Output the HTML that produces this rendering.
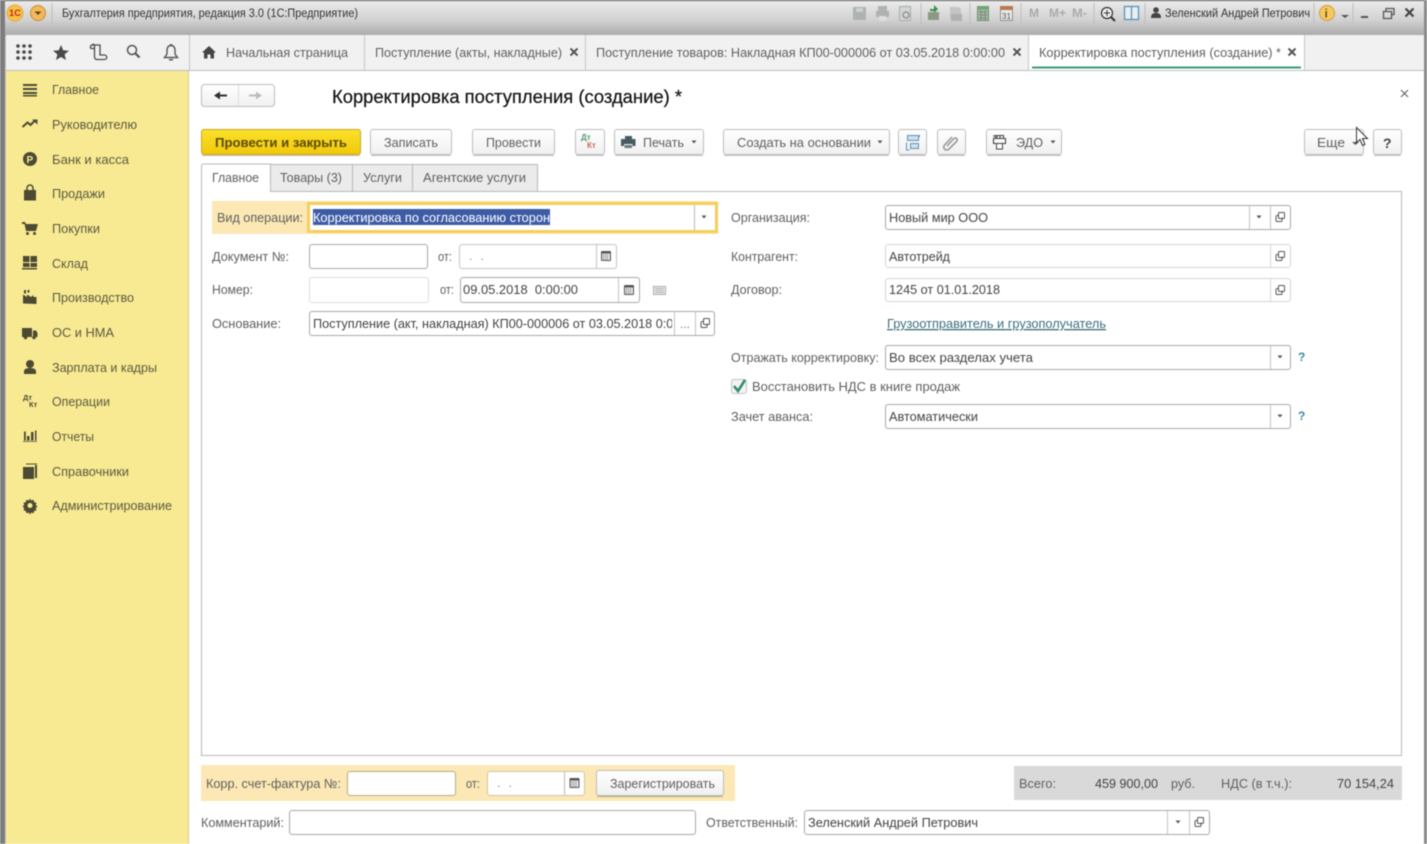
<!DOCTYPE html>
<html lang="ru"><head><meta charset="utf-8"><title>Корректировка поступления</title>
<style>
html,body{margin:0;padding:0;background:#fff;overflow:hidden}
svg{display:block;filter:blur(.45px)}
text{font-family:"Liberation Sans",sans-serif;font-size:13px;fill:#606060}
.s text{fill:#5c5a40}
.l{fill:#fff;stroke:#a9a9a9}
.b{fill:url(#btn);stroke:#bdbdbd}
</style></head><body>
<svg width="1427" height="844" viewBox="0 0 1427 844" xmlns="http://www.w3.org/2000/svg">
<defs>
<linearGradient id="tb" x1="0" y1="0" x2="0" y2="1"><stop offset="0" stop-color="#ececec"/><stop offset=".55" stop-color="#d2d2d2"/><stop offset="1" stop-color="#a9a9a9"/></linearGradient>
<linearGradient id="btn" x1="0" y1="0" x2="0" y2="1"><stop offset="0" stop-color="#fff"/><stop offset="1" stop-color="#f0f0f0"/></linearGradient>
<linearGradient id="yb" x1="0" y1="0" x2="0" y2="1"><stop offset="0" stop-color="#fbe12b"/><stop offset="1" stop-color="#f1c809"/></linearGradient>
<clipPath id="osn"><rect x="313" y="313" width="359" height="20"/></clipPath>
<g id="open" fill="none" stroke="#555" stroke-width="1"><rect x="-1.5" y="-4.5" width="6" height="6" rx="1"/><path d="M-1.5-1.5h-1.5a1 1 0 0 0-1 1v4a1 1 0 0 0 1 1h4a1 1 0 0 0 1-1v-3"/></g>
<path id="arr" d="M-2.500-1.500h5l-2.500 3z" fill="#555"/>
<g id="cal"><rect x="-5" y="-5" width="10" height="10" rx="1" fill="#555"/><rect x="-4" y="-2.500" width="8" height="6.500" fill="#e6e6e6"/><path d="M-3-1h6M-3 1h6M-3 3h6" stroke="#666" stroke-dasharray="1 1"/></g>
<g id="x"><path d="M-3.500-3.500l7 7M3.500-3.500l-7 7" stroke="#555" stroke-width="2"/></g>
</defs>

<rect width="1427" height="844" fill="#fff"/>
<!-- title bar -->
<rect width="1427" height="36" fill="url(#tb)"/>
<rect width="1427" height="1" fill="#555"/>
<circle cx="15" cy="13" r="8" fill="#f6c445" stroke="#e8a93a"/>
<text x="9" y="16" font-weight="700" textLength="12" lengthAdjust="spacingAndGlyphs" style="font-size:9px;fill:#c8261a">1С</text>
<circle cx="38" cy="13" r="7.500" fill="#f3b85a" stroke="#c98a31"/>
<path d="M34.500 11.500h7l-3.500 3.500z" fill="#5a4522"/>
<path d="M52 3v21" stroke="#bbb"/>
<text x="62" y="17" textLength="296" lengthAdjust="spacingAndGlyphs" style="font-size:11.500px;fill:#333">Бухгалтерия предприятия, редакция 3.0  (1С:Предприятие)</text>
<g fill="#aeb2b2">
<path d="M853 7h13v13h-13z"/><rect x="856" y="8" width="7" height="4" fill="#cfd1d1"/>
<path d="M878 6h9v5h-9zM876 11h13v6h-13z"/><rect x="879" y="16" width="7" height="5" fill="#ddd"/>
<rect x="899.500" y="6.500" width="11" height="14" fill="#d4d6d6" stroke="#aaa"/>
<circle cx="906" cy="15" r="3" fill="none" stroke="#8f9595" stroke-width="1.500"/>
<path d="M928 12h11v8h-11z" fill="#8b9a85"/><path d="M930 9h4V5l4 4-4 4v-2h-4z" fill="#3f8f4a"/>
<path d="M950 7h9l2 2v10h-11z" fill="#c4c6c6"/><path d="M951 14h11v7h-11z"/>
<rect x="977.500" y="6.500" width="11" height="14" fill="#a3b8a3" stroke="#6e8f70"/><rect x="977.500" y="6.500" width="11" height="3" fill="#6fa873"/><path d="M979 12h8M979 15h8M979 18h8M981 10v10M985 10v10" stroke="#7d8f7d"/>
<rect x="1000.500" y="7.500" width="12" height="13" fill="#e8e8e8" stroke="#9a8f85"/><rect x="1000" y="6" width="13" height="4" fill="#b97a50"/>
</g>
<text x="1002" y="19" textLength="9" lengthAdjust="spacingAndGlyphs" style="font-size:8px;fill:#555">31</text>
<path d="M921 3v21M970 3v21M1021 3v21M1094 3v21M1145 3v21M1314 3v21M1353 3v21" stroke="#bdbdbd"/>
<text x="1029" y="17" font-weight="700" textLength="10" lengthAdjust="spacingAndGlyphs" style="font-size:12px;fill:#a9abab">M</text>
<text x="1049" y="17" font-weight="700" textLength="17" lengthAdjust="spacingAndGlyphs" style="font-size:12px;fill:#a9abab">M+</text>
<text x="1072" y="17" font-weight="700" textLength="15" lengthAdjust="spacingAndGlyphs" style="font-size:12px;fill:#a9abab">M-</text>
<circle cx="1107" cy="13" r="5.500" fill="#eee" stroke="#333" stroke-width="1.200"/><path d="M1111 17l4 4" stroke="#333" stroke-width="2"/><path d="M1104 13h6M1107 10v6" stroke="#333"/>
<rect x="1124.500" y="6.500" width="14" height="13" fill="#e9eef2" stroke="#5a93b8" stroke-width="1.300"/><path d="M1131.500 7v12" stroke="#5a93b8" stroke-width="1.300"/>
<circle cx="1156" cy="10" r="2.800" fill="#444"/><path d="M1151 18c0-4 2-5 5-5s5 1 5 5z" fill="#444"/>
<text x="1165" y="17" textLength="145" lengthAdjust="spacingAndGlyphs" style="font-size:12px;fill:#333">Зеленский Андрей Петрович</text>
<circle cx="1327" cy="13" r="7.500" fill="#f5c95f" stroke="#d39a38"/>
<text x="1324.500" y="17.500" font-weight="700" style="font-size:12px;fill:#6e5520">i</text>
<path d="M1341 15h8l-4 3z" fill="#555"/>
<path d="M1361 17h7" stroke="#555" stroke-width="2"/>
<path d="M1383.500 11.500h8v7h-8zM1386 11V8.500h8v6h-2" fill="none" stroke="#555" stroke-width="1.300"/>
<path d="M1405.500 8.500l8 8M1413.500 8.500l-8 8" stroke="#444" stroke-width="2.200"/>

<!-- frame -->
<rect x="0" y="0" width="5" height="844" fill="#7d7d7d"/>
<rect x="5" y="36" width="1" height="808" fill="#c7c7c7"/>
<rect x="1424" y="0" width="3" height="844" fill="#8a8a8a"/>

<!-- panel tab bar -->
<rect x="6" y="35" width="1418" height="35" fill="#f1f1f1"/>
<rect x="6" y="70" width="1418" height="1" fill="#bfbfbf"/>
<g fill="#4a4a4a">
<circle cx="18" cy="46" r="1.800"/><circle cx="24" cy="46" r="1.800"/><circle cx="30" cy="46" r="1.800"/>
<circle cx="18" cy="52" r="1.800"/><circle cx="24" cy="52" r="1.800"/><circle cx="30" cy="52" r="1.800"/>
<circle cx="18" cy="58" r="1.800"/><circle cx="24" cy="58" r="1.800"/><circle cx="30" cy="58" r="1.800"/>
<path d="M61 45l2.200 5.200 5.800.5-4.400 3.700 1.400 5.600-5-3-5 3 1.400-5.600-4.400-3.700 5.800-.5z"/>
</g>
<path d="M90.500 48.500v-2a1.500 1.500 0 0 1 1.500-1.500h8v10h4.500a2 2 0 0 1 0 4.500h-7.500a2.500 2.500 0 0 1-2.500-2.500v-11a2 2 0 0 0-2-2M90.500 48.500h3.500" fill="none" stroke="#4a4a4a" stroke-width="1.300"/>
<circle cx="132" cy="50" r="4.500" fill="none" stroke="#555" stroke-width="1.500"/><path d="M135.500 53.500l4 4" stroke="#555" stroke-width="2.200"/>
<path d="M171 45.500c-3 0-4 2.500-4 5v3.500l-2.500 3.500h13l-2.500-3.500v-3.500c0-2.500-1-5-4-5z" fill="none" stroke="#555" stroke-width="1.400"/><path d="M169 59h4v1.500h-4zM170 44h2v2h-2z" fill="#555"/>
<path d="M209 46l-7 6.500h2v6h3.500v-4h3v4h3.500v-6h2z" fill="#444"/>
<path d="M189.500 35v35M364.500 35v35M585.500 35v35M1028.500 35v35M1304.500 35v35" stroke="#c4c4c4"/>
<rect x="1029" y="35" width="275" height="35" fill="#fff"/>
<rect x="1032" y="66.500" width="269" height="2" fill="#3a9a7a"/>
<text x="226" y="57" textLength="122" lengthAdjust="spacingAndGlyphs">Начальная страница</text>
<text x="375" y="57" textLength="187" lengthAdjust="spacingAndGlyphs">Поступление (акты, накладные)</text>
<text x="596" y="57" textLength="409" lengthAdjust="spacingAndGlyphs">Поступление товаров: Накладная КП00-000006 от 03.05.2018 0:00:00</text>
<text x="1039" y="57" textLength="242" lengthAdjust="spacingAndGlyphs">Корректировка поступления (создание) *</text>
<use href="#x" x="574" y="52"/><use href="#x" x="1017" y="52"/><use href="#x" x="1292" y="52"/>

<!-- sidebar -->
<rect x="6" y="71" width="183" height="773" fill="#f8ea92"/>
<rect x="188" y="71" width="1" height="773" fill="#d3cb8e"/>
<g class="s">
<text x="52" y="94" textLength="47" lengthAdjust="spacingAndGlyphs">Главное</text>
<text x="52" y="129" textLength="85" lengthAdjust="spacingAndGlyphs">Руководителю</text>
<text x="52" y="164" textLength="77" lengthAdjust="spacingAndGlyphs">Банк и касса</text>
<text x="52" y="198" textLength="53" lengthAdjust="spacingAndGlyphs">Продажи</text>
<text x="52" y="233" textLength="48" lengthAdjust="spacingAndGlyphs">Покупки</text>
<text x="52" y="268" textLength="36" lengthAdjust="spacingAndGlyphs">Склад</text>
<text x="52" y="302" textLength="82" lengthAdjust="spacingAndGlyphs">Производство</text>
<text x="52" y="337" textLength="62" lengthAdjust="spacingAndGlyphs">ОС и НМА</text>
<text x="52" y="372" textLength="105" lengthAdjust="spacingAndGlyphs">Зарплата и кадры</text>
<text x="52" y="406" textLength="58" lengthAdjust="spacingAndGlyphs">Операции</text>
<text x="52" y="441" textLength="42" lengthAdjust="spacingAndGlyphs">Отчеты</text>
<text x="52" y="476" textLength="77" lengthAdjust="spacingAndGlyphs">Справочники</text>
<text x="52" y="510" textLength="120" lengthAdjust="spacingAndGlyphs">Администрирование</text>
</g>
<g fill="#4d4a33">
<path d="M23 84h14v2h-14zM23 88h14v2h-14zM23 92h14v2h-14zM23 95h14v1.500h-14z"/>
<path d="M22.500 127l5-4.500 3 2.500 4-4" fill="none" stroke="#4d4a33" stroke-width="2"/><path d="M32 119.500h5.500v5z"/>
<circle cx="30" cy="159" r="7"/>
<path d="M24 190h12v10.500h-12z"/>
<path d="M27 190v-2a3 3 0 0 1 6 0v2" fill="none" stroke="#4d4a33" stroke-width="1.500"/>
<path d="M22 222h3l1 2h12l-2 7h-10l-1.500-7h-2.500z"/><circle cx="27.500" cy="233.500" r="1.500"/><circle cx="34.500" cy="233.500" r="1.500"/>
<path d="M23 256h6.500v6h-6.500zM30.500 256h6.500v6h-6.500zM23 263h6.500v4h-6.500zM30.500 263h6.500v4h-6.500zM22 268h15v1.500h-15z"/>
<path d="M23 303.500v-9l4 2.500v-2.500l4 2.500 2.500-2v2h3v7zM24 290h2v3.500h-2zM27.500 290h2v2.500h-2z"/>
<path d="M22 328h10v9h-10zM33 330.500h3l1.500 2.500v4h-4.500z"/><circle cx="25.500" cy="337.500" r="1.800"/><circle cx="34" cy="337.500" r="1.800"/>
<circle cx="30" cy="364" r="4"/><path d="M24 374v-3c0-2 3-3 6-3s6 1 6 3v3z"/>
<path d="M24 431.500h1.800v9h-1.800zM27 436h2.500v4.500h-2.500zM31 432h2.500v8.500h-2.500zM35 430.500h1.500v10h-1.500zM23 441h14v.8h-14z"/>
<path d="M23 467h11v12h-11z"/><path d="M35 465h2v13h-2zM26 463.500h11v1h-11z"/>
<path d="M30 498.500l1.200 2 2.300-.7.700 2.300 2.300.7-.7 2.300 1.700 1.400-1.700 1.500.7 2.300-2.300.7-.7 2.300-2.300-.7-1.200 2-1.200-2-2.300.7-.7-2.300-2.300-.7.700-2.300-1.700-1.500 1.700-1.400-.7-2.300 2.300-.7.700-2.300 2.300.7z"/>
</g>
<circle cx="30" cy="505.500" r="2.500" fill="#f8ea92"/>
<text x="26.500" y="163" font-weight="700" style="font-size:10px;fill:#f8ea92">Р</text>
<text x="23" y="400" font-weight="700" style="font-size:7.500px;fill:#4d4a33">Дт</text>
<text x="29" y="407" font-weight="700" style="font-size:7.500px;fill:#4d4a33">Кт</text>

<!-- header -->
<rect x="201.500" y="84.500" width="73" height="22" rx="3" class="b"/><path d="M238.500 85v21" stroke="#ddd"/>
<path d="M214 95.500l6-4v3h7v2h-7v3z" fill="#333"/>
<path d="M262 95.500l-6-4v3h-7v2h7v3z" fill="#bdbdbd"/>
<text x="332" y="103" textLength="350" lengthAdjust="spacingAndGlyphs" stroke="#111" stroke-width=".2" style="font-size:18px;fill:#111">Корректировка поступления (создание) *</text>
<path d="M1401 90l7 7M1408 90l-7 7" stroke="#666" stroke-width="1.200"/>

<!-- command bar -->
<rect x="201.500" y="129.500" width="159" height="25" rx="2.500" fill="url(#yb)" stroke="#c9a626"/>
<rect x="370.500" y="129.500" width="81" height="25" rx="2.500" class="b"/>
<rect x="472.500" y="129.500" width="82" height="25" rx="2.500" class="b"/>
<rect x="575.500" y="129.500" width="29" height="25" rx="2.500" class="b"/>
<rect x="614.500" y="129.500" width="89" height="25" rx="2.500" class="b"/>
<rect x="723.500" y="129.500" width="166" height="25" rx="2.500" class="b"/>
<rect x="898.500" y="129.500" width="28" height="25" rx="2.500" class="b"/>
<rect x="937.500" y="129.500" width="28" height="25" rx="2.500" class="b"/>
<rect x="986.500" y="129.500" width="75" height="25" rx="2.500" class="b"/>
<rect x="1304.500" y="129.500" width="59" height="25" rx="2.500" class="b"/>
<rect x="1373.500" y="129.500" width="28" height="25" rx="2.500" class="b"/>
<path d="M202 155.500h158M371 155.500h80M473 155.500h81M576 155.500h28M615 155.500h88M724 155.500h165M899 155.500h27M938 155.500h27M987 155.500h74M1305 155.500h58M1374 155.500h27" stroke="#c2c2c2"/>
<text x="215" y="147" font-weight="700" textLength="132" lengthAdjust="spacingAndGlyphs" style="fill:#5b4a07">Провести и закрыть</text>
<text x="384" y="147" textLength="54" lengthAdjust="spacingAndGlyphs">Записать</text>
<text x="486" y="147" textLength="55" lengthAdjust="spacingAndGlyphs">Провести</text>
<text x="581" y="140" font-weight="700" style="font-size:8px;fill:#4f9a70">Дт</text>
<text x="587" y="148" font-weight="700" style="font-size:8px;fill:#d0665c">Кт</text>
<path d="M625 136h7v3h-7zM621 139h14.500v7h-3v-2h-8.500v2h-3z" fill="#4a5a62"/><rect x="624.500" y="145" width="7.500" height="3" fill="#6a7a82"/>
<text x="643" y="147" textLength="41" lengthAdjust="spacingAndGlyphs">Печать</text>
<use href="#arr" x="694" y="142"/>
<text x="737" y="147" textLength="134" lengthAdjust="spacingAndGlyphs">Создать на основании</text>
<use href="#arr" x="880" y="142"/>
<path d="M907.500 135.500h11v5h-11zM910.500 143.500h8v5h-8z" fill="#cfe0ec" stroke="#5d92b5"/><path d="M906.500 142.500v7.500h3M919.500 135v2" fill="none" stroke="#5d92b5"/>
<path d="M947 146l7-7.500a2 2 0 0 1 3 2.500l-8 8a3 3 0 0 1-4.500-4l7.500-8" fill="none" stroke="#999" stroke-width="1.600"/>
<path d="M995.500 135.500h8v3h-8zM994 137v-2M997 135v3M1000 135v3M993.500 138.500h12v5h-12z" fill="none" stroke="#444" stroke-width="1.100"/><rect x="996.500" y="143.500" width="6" height="5.500" fill="#fff" stroke="#444"/>
<text x="1016" y="147" textLength="27" lengthAdjust="spacingAndGlyphs">ЭДО</text>
<use href="#arr" x="1053" y="142"/>
<text x="1317" y="147" textLength="28" lengthAdjust="spacingAndGlyphs">Еще</text>
<path d="M1352 142h7l-3.500 3z" fill="#555"/>
<text x="1383" y="148" font-weight="700" style="font-size:14px;fill:#444">?</text>
<path d="M1356.500 127.500v15l3.500-3 2.500 6 2.500-1-2.500-6h5z" fill="#fff" stroke="#333"/>

<!-- tabs and group -->
<rect x="201.500" y="191.500" width="1200" height="564" fill="#fff" stroke="#b8b8b8"/>
<rect x="270.500" y="164.500" width="82" height="27" fill="#ebebeb" stroke="#b8b8b8"/>
<rect x="352.500" y="164.500" width="60" height="27" fill="#ebebeb" stroke="#b8b8b8"/>
<rect x="412.500" y="164.500" width="125" height="27" fill="#ebebeb" stroke="#b8b8b8"/>
<path d="M201.500 192v-26a2 2 0 0 1 2-2h67v28" fill="#fff" stroke="#b8b8b8"/>
<rect x="202" y="190" width="68" height="3" fill="#fff"/>
<text x="212" y="182" textLength="47" lengthAdjust="spacingAndGlyphs">Главное</text>
<text x="280" y="182" textLength="62" lengthAdjust="spacingAndGlyphs">Товары (3)</text>
<text x="363" y="182" textLength="39" lengthAdjust="spacingAndGlyphs">Услуги</text>
<text x="423" y="182" textLength="103" lengthAdjust="spacingAndGlyphs">Агентские услуги</text>

<!-- left column -->
<rect x="212" y="201" width="506" height="33" fill="#fbe8b4"/>
<rect x="308.500" y="203.500" width="408" height="28" fill="#fff" stroke="#f4cf5c" stroke-width="3"/>
<path d="M694.500 205v25" stroke="#bbb"/>
<use href="#arr" x="704" y="217"/>
<rect x="313" y="209" width="237" height="16" fill="#3e5ba6"/>
<text x="217" y="222" textLength="86" lengthAdjust="spacingAndGlyphs">Вид операции:</text>
<text x="313" y="222" textLength="237" lengthAdjust="spacingAndGlyphs" style="fill:#fff">Корректировка по согласованию сторон</text>

<text x="212" y="261" textLength="77" lengthAdjust="spacingAndGlyphs">Документ №:</text>
<rect x="309.500" y="244.500" width="118" height="24" rx="2.500" class="l"/>
<text x="438" y="261" textLength="14" lengthAdjust="spacingAndGlyphs">от:</text>
<rect x="459.500" y="244.500" width="157" height="24" rx="2.500" fill="#fff" stroke="#c4c4c4"/>
<path d="M596.500 245v23" stroke="#c4c4c4"/>
<text x="469" y="260" textLength="15" lengthAdjust="spacing" style="fill:#999">. .</text>
<use href="#cal" x="606" y="256"/>

<text x="212" y="294" textLength="41" lengthAdjust="spacingAndGlyphs">Номер:</text>
<rect x="309.500" y="277.500" width="119" height="25" rx="2.500" fill="#fff" stroke="#dedede"/>
<text x="440" y="294" textLength="14" lengthAdjust="spacingAndGlyphs">от:</text>
<rect x="460.500" y="277.500" width="179" height="25" rx="2.500" class="l"/>
<path d="M618.500 278v24" stroke="#c4c4c4"/>
<text x="463" y="294" textLength="115" lengthAdjust="spacingAndGlyphs" style="fill:#444">09.05.2018&#160;&#160;0:00:00</text>
<use href="#cal" x="629" y="290"/>
<rect x="653.500" y="286.500" width="12" height="8" fill="#f2f2f2" stroke="#aaa"/><path d="M655 288.500h9M655 290.500h9M655 292.500h9" stroke="#aaa"/>

<text x="212" y="328" textLength="69" lengthAdjust="spacingAndGlyphs">Основание:</text>
<rect x="309.500" y="311.500" width="405" height="24" rx="2.500" class="l"/>
<path d="M674.500 312v23M695.500 312v23" stroke="#c4c4c4"/>
<g clip-path="url(#osn)"><text x="313" y="328" textLength="385" lengthAdjust="spacingAndGlyphs" style="fill:#444">Поступление (акт, накладная) КП00-000006 от 03.05.2018 0:00:00</text></g>
<text x="680" y="328" style="font-size:12px;fill:#777">...</text>
<use href="#open" x="705" y="323"/>

<!-- right column -->
<text x="731" y="222" textLength="79" lengthAdjust="spacingAndGlyphs">Организация:</text>
<rect x="885.500" y="205.500" width="405" height="24" rx="2.500" class="l"/>
<path d="M1249.500 206v23M1270.500 206v23" stroke="#c4c4c4"/>
<text x="889" y="222" textLength="99" lengthAdjust="spacingAndGlyphs" style="fill:#444">Новый мир ООО</text>
<use href="#arr" x="1259" y="217"/><use href="#open" x="1280" y="217"/>

<text x="731" y="261" textLength="67" lengthAdjust="spacingAndGlyphs">Контрагент:</text>
<rect x="885.500" y="244.500" width="405" height="23" rx="2.500" fill="#fff" stroke="#d4d4d4"/>
<path d="M1270.500 245v22" stroke="#d4d4d4"/>
<text x="889" y="261" textLength="61" lengthAdjust="spacingAndGlyphs" style="fill:#444">Автотрейд</text>
<use href="#open" x="1280" y="256"/>

<text x="731" y="294" textLength="51" lengthAdjust="spacingAndGlyphs">Договор:</text>
<rect x="885.500" y="278.500" width="405" height="23" rx="2.500" fill="#fff" stroke="#d4d4d4"/>
<path d="M1270.500 279v22" stroke="#d4d4d4"/>
<text x="889" y="294" textLength="111" lengthAdjust="spacingAndGlyphs" style="fill:#444">1245 от 01.01.2018</text>
<use href="#open" x="1280" y="290"/>

<text x="887" y="328" textLength="219" lengthAdjust="spacingAndGlyphs" text-decoration="underline" style="fill:#3d6f7d">Грузоотправитель и грузополучатель</text>

<text x="731" y="362" textLength="148" lengthAdjust="spacingAndGlyphs">Отражать корректировку:</text>
<rect x="885.500" y="345.500" width="405" height="24" rx="2.500" class="l"/>
<path d="M1270.500 346v23" stroke="#c4c4c4"/>
<text x="889" y="362" textLength="144" lengthAdjust="spacingAndGlyphs" style="fill:#444">Во всех разделах учета</text>
<use href="#arr" x="1280" y="357"/>
<text x="1298" y="361" font-weight="700" style="font-size:12px;fill:#3d8a9a">?</text>

<rect x="731.500" y="379.500" width="15" height="14" rx="2" fill="#f3f3f3" stroke="#c4c4c4"/>
<path d="M734 386l4 5 7-11" fill="none" stroke="#2f8f70" stroke-width="2.600"/>
<text x="752" y="391" textLength="208" lengthAdjust="spacingAndGlyphs">Восстановить НДС в книге продаж</text>

<text x="731" y="421" textLength="82" lengthAdjust="spacingAndGlyphs">Зачет аванса:</text>
<rect x="885.500" y="404.500" width="405" height="24" rx="2.500" class="l"/>
<path d="M1270.500 405v23" stroke="#c4c4c4"/>
<text x="889" y="421" textLength="89" lengthAdjust="spacingAndGlyphs" style="fill:#444">Автоматически</text>
<use href="#arr" x="1280" y="416"/>
<text x="1298" y="420" font-weight="700" style="font-size:12px;fill:#3d8a9a">?</text>

<!-- bottom -->
<rect x="201" y="765" width="534" height="36" fill="#fbe8b4"/>
<text x="206" y="788" textLength="135" lengthAdjust="spacingAndGlyphs">Корр. счет-фактура №:</text>
<rect x="347.500" y="771.500" width="108" height="24" rx="2.500" fill="#fff" stroke="#b7ab88"/>
<text x="466" y="788" textLength="14" lengthAdjust="spacingAndGlyphs">от:</text>
<rect x="487.500" y="771.500" width="97" height="24" rx="2.500" fill="#fff" stroke="#cfc6a5"/>
<path d="M564.500 772v23" stroke="#bbb"/>
<text x="497" y="787" textLength="15" lengthAdjust="spacing" style="fill:#999">. .</text>
<use href="#cal" x="574.500" y="783"/>
<rect x="596.500" y="770.500" width="127" height="25" rx="2.500" class="b"/>
<path d="M597 796.500h126" stroke="#b5a878"/>
<text x="610" y="788" textLength="105" lengthAdjust="spacingAndGlyphs">Зарегистрировать</text>

<rect x="1014" y="766" width="388" height="34" fill="#d9d9d9"/>
<text x="1019" y="788" textLength="37" lengthAdjust="spacingAndGlyphs">Всего:</text>
<text x="1095" y="788" textLength="63" lengthAdjust="spacingAndGlyphs" style="fill:#444">459 900,00</text>
<text x="1171" y="788" textLength="24" lengthAdjust="spacingAndGlyphs">руб.</text>
<text x="1221" y="788" textLength="71" lengthAdjust="spacingAndGlyphs">НДС (в т.ч.):</text>
<text x="1337" y="788" textLength="57" lengthAdjust="spacingAndGlyphs" style="fill:#444">70 154,24</text>

<text x="201" y="827" textLength="83" lengthAdjust="spacingAndGlyphs">Комментарий:</text>
<rect x="289.500" y="810.500" width="406" height="24" rx="2.500" class="l"/>
<text x="706" y="827" textLength="92" lengthAdjust="spacingAndGlyphs">Ответственный:</text>
<rect x="804.500" y="810.500" width="405" height="24" rx="2.500" class="l"/>
<path d="M1167.500 811v23M1189.500 811v23" stroke="#c4c4c4"/>
<text x="808" y="827" textLength="170" lengthAdjust="spacingAndGlyphs" style="fill:#444">Зеленский Андрей Петрович</text>
<use href="#arr" x="1178" y="822"/><use href="#open" x="1199" y="822"/>
</svg>
</body></html>
